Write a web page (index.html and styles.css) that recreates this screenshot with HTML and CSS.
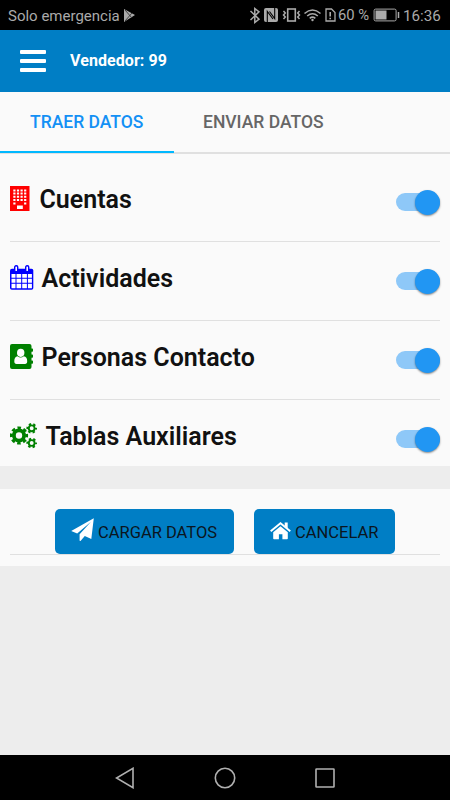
FILE: index.html
```html
<!DOCTYPE html>
<html lang="es">
<head>
<meta charset="utf-8">
<meta name="viewport" content="width=device-width, initial-scale=1">
<title>Vendedor</title>
<link rel="stylesheet" href="styles.css">
</head>
<body>
<div class="status">
  <span class="carrier">Solo emergencia</span>
  <svg class="play" width="13" height="13" viewBox="0 0 13 13"><path d="M1 0 12 6 1 13z" fill="#aaa"/><path d="M2 1 9 9M2 12 9 4" stroke="#333" stroke-width=".9"/></svg>
  <svg class="signals" width="90" height="18" viewBox="248 6 90 18" fill="none" stroke="#aaa" stroke-width="1.3">
    <path d="M250.500 11 259 19.200 254.800 22.500V8.500L259 11.800 250.500 20" stroke-width="1.500"/>
    <rect x="264" y="8" width="14" height="14" rx="2" fill="#aaa" stroke="none"/><path d="M267.300 22V11.500L273 19M274.700 8V18.500L269.500 11.500" stroke="#000" stroke-width="1.100"/>
    <rect x="287.700" y="9" width="7.600" height="12" stroke-width="1.600"/><path d="M283.500 11 285.300 13 283.500 15 285.300 17 283.500 19M299.500 11 297.700 13 299.500 15 297.700 17 299.500 19" stroke-width="1.500"/>
    <path d="M304.500 13.500Q312.500 6.500 320.500 13.500M307.200 16Q312.500 11.500 317.800 16M309.700 18.300Q312.500 16 315.300 18.300" stroke-width="1.600"/><circle cx="312.500" cy="20" r="1.200" fill="#aaa" stroke="none"/>
    <path d="M326 9H331.500L335 12.500V21H326z"/><path d="M330.200 12V16.500M330.200 17.700V19.200" stroke-width="1.600"/>
  </svg>
  <span class="percent">60 %</span>
  <svg class="battery" width="27" height="14" viewBox="0 0 27 14"><rect x="1.100" y="1.100" width="22" height="11.800" rx="1.500" fill="none" stroke="#aaa"/><path d="M2.500 2.500h11v9h-11z" fill="#aaa"/><path d="M25.500 4v6" stroke="#aaa" stroke-width="1.500"/></svg>
  <span class="clock">16:36</span>
</div>

<header class="bar">
  <div class="menu"><i></i><i></i><i></i></div>
  <h1>Vendedor: 99</h1>
</header>

<nav class="tabs">
  <a class="tab active">TRAER DATOS</a>
  <a class="tab">ENVIAR DATOS</a>
</nav>

<main class="list">
  <div class="row">
    <svg width="20" height="25" viewBox="0 0 20 25"><path d="M0 0h19.500v25H0z" fill="red"/><path d="M3.300 4.500h13M3.300 7.600h13M3.300 10.800h13M3.300 14h13" stroke="#fff" stroke-width="2" stroke-dasharray="2.200 1.400"/><path d="M3.300 16.500h2.200v2h-2.200zM14.100 16.500h2.200v2h-2.200zM7 19.400h5.800v3.700H7z" fill="#fff"/></svg>
    <span class="label cuentas">Cuentas</span><span class="switch"></span>
  </div>
  <div class="row">
    <svg width="24" height="25" viewBox="0 0 24 25"><path d="M2 3.700h19.500q1.800 0 1.800 1.800v17.500q0 1.800-1.800 1.800H1.800Q0 24.800 0 23V5.500Q0 3.700 2 3.700z" fill="#00f"/><path d="M1.500 9h4v3.700h-4zM6.500 9h4.700v3.700H6.500zM12.200 9h4.700v3.700h-4.700zM17.900 9h4v3.700h-4zM1.500 13.700h4v4.100h-4zM6.500 13.700h4.700v4.100H6.500zM12.200 13.700h4.700v4.100h-4.700zM17.900 13.700h4v4.100h-4zM1.500 18.800h4v4.500h-4zM6.500 18.800h4.700v4.500H6.500zM12.200 18.800h4.700v4.500h-4.700zM17.900 18.800h4v4.500h-4z" fill="#fff"/><rect x="4.700" y=".8" width="3" height="6" rx="1.300" fill="#fff" stroke="#00f" stroke-width="1.400"/><rect x="15.700" y=".8" width="3" height="6" rx="1.300" fill="#fff" stroke="#00f" stroke-width="1.400"/></svg>
    <span class="label actividades">Actividades</span><span class="switch"></span>
  </div>
  <div class="row">
    <svg width="24" height="25" viewBox="0 0 24 25"><path d="M2 0h17.500q2 0 2 2v2.500h.8q.7 0 .7.700v1.900q0 .7-.7.700h-.8v2.700h.8q.7 0 .7.700v1.900q0 .7-.7.700h-.8v2.700h.8q.7 0 .7.700v1.900q0 .7-.7.700h-.8V23q0 2-2 2H2q-2 0-2-2V2q0-2 2-2z" fill="green"/><ellipse cx="10.700" cy="8.800" rx="3.700" ry="4.100" fill="#fff"/><path d="M7.600 12.200q3 2.400 6.200 0 3.400.5 3.400 5 0 2.700-2.200 2.700H6.500q-2.200 0-2.200-2.700 0-4.500 3.300-5z" fill="#fff"/></svg>
    <span class="label personas">Personas Contacto</span><span class="switch"></span>
  </div>
  <div class="row">
    <svg width="28" height="26" viewBox="0 0 28 26" fill="none" stroke="green"><circle cx="9" cy="12.500" r="5.100" stroke-width="3.800"/><circle cx="9" cy="12.500" r="7.700" stroke-width="2.800" stroke-dasharray="3.500 2.548" stroke-dashoffset="1.750"/><circle cx="21.700" cy="5.300" r="2.900" stroke-width="1.900"/><circle cx="21.700" cy="5.300" r="4.300" stroke-width="2" stroke-dasharray="2.300 2.203" stroke-dashoffset="1.150"/><circle cx="21.700" cy="20" r="2.900" stroke-width="1.900"/><circle cx="21.700" cy="20" r="4.300" stroke-width="2" stroke-dasharray="2.300 2.203" stroke-dashoffset="1.150"/></svg>
    <span class="label tablas">Tablas Auxiliares</span><span class="switch"></span>
  </div>
</main>

<section class="actions">
  <div class="buttons">
    <button class="load"><svg width="23" height="24" viewBox="0 0 23 24"><path d="M22.800.2 20.300 21 13.800 18 9.500 23 8.600 22.700V16.300L20 3.800 6.200 15.600.2 12.900z" fill="#fff"/></svg><span>CARGAR DATOS</span></button>
    <button class="cancel"><svg width="21" height="18" viewBox="0 0 21 18"><path d="M10.500 4.200 17.800 10.300V16.500q0 .8-.8.800H12.400V12.300H8.900V17.300H4q-.8 0-.8-.8V10.300z" fill="#fff"/><path d="M.7 9.200 10.500 1.200 20.300 9.200" fill="none" stroke="#fff" stroke-width="1.900"/><path d="M14.700.5h3v6.200l-3-2.400z" fill="#fff"/></svg><span>CANCELAR</span></button>
  </div>
</section>

<footer class="nav">
  <svg width="20" height="22" viewBox="0 0 20 22"><path d="M18 1.300V20.700L1.500 11z"/></svg>
  <svg width="22" height="22" viewBox="0 0 22 22"><circle cx="11" cy="11" r="9.700"/></svg>
  <svg width="20" height="20" viewBox="0 0 20 20"><rect x="1" y="1" width="18" height="18" rx=".5"/></svg>
</footer>
</body>
</html>
```

FILE: styles.css
```css
* { box-sizing: border-box; }
body {
  margin: 0;
  width: 450px;
  height: 800px;
  display: flex;
  flex-direction: column;
  background: #ededed;
  font-family: Roboto, sans-serif;
  overflow: hidden;
}
svg { display: block; flex: none; }
span, a, h1 { white-space: nowrap; }

.status {
  height: 30px;
  flex: none;
  display: flex;
  align-items: center;
  background: #000;
  color: #aaa;
  padding-left: 8px;
  font-size: 15.5px;
}
.carrier { width: 115px; font-size: 15px; padding-top: 1px; }
.signals { margin-left: 112px; }
.percent { width: 35px; font-size: 14.800px; }
.battery { margin-right: 3px; }
.clock { font-size: 15.200px; padding-top: 1px; }

.bar {
  height: 62px;
  flex: none;
  display: flex;
  align-items: center;
  gap: 24px;
  padding-left: 20px;
  background: #007ec5;
  color: #fff;
}
.menu {
  width: 26px;
  display: flex;
  flex-direction: column;
  gap: 4.5px;
}
.menu i { height: 4.300px; background: #fff; border-radius: 1px; }
h1 { margin: 0; padding-bottom: 2px; font-size: 16px; font-weight: 700; letter-spacing: 0.070px; }

.tabs {
  height: 62px;
  flex: none;
  display: flex;
  background: #fafafa;
  border-bottom: 2px solid #e0e0e0;
}
.tab {
  height: 61px;
  padding: 0 30px;
  line-height: 60px;
  font-size: 17.500px;
  font-weight: 500;
  color: #666;
}
.tab + .tab { padding-left: 29px; }
.tab.active { width: 174px; color: #1390f5; border-bottom: 2px solid #00b8ff; }

.list {
  height: 312px;
  flex: none;
  padding: 9px 10px 0;
  background: #fafafa;
}
.row {
  height: 78.900px;
  display: flex;
  align-items: center;
  padding-bottom: 5px;
  border-bottom: 1.500px solid #e0e0e0;
}
.row:last-child { border-bottom: 0; padding-bottom: 6px; }
.row > svg { margin-top: -1px; }
.row:last-child > svg { margin-top: 0; }
.label {
  margin: 0 0 0 7.500px;
  font-size: 25px;
  font-weight: 600;
  color: #111;
}
.cuentas { margin-left: 9.500px; }
.switch {
  width: 44px;
  height: 18px;
  margin: 6px 0 0 auto;
  display: flex;
  align-items: center;
  justify-content: flex-end;
  border-radius: 9px;
  background: #8ec8f8;
}
.switch::before {
  content: "";
  width: 25px;
  height: 25px;
  border-radius: 50%;
  background: #2196f3;
  box-shadow: 0 1px 2px rgba(0, 0, 0, 0.45);
}

.actions {
  height: 77px;
  flex: none;
  margin-top: 23px;
  padding: 20px 10px 0;
  background: #fafafa;
}
.buttons {
  height: 46px;
  display: flex;
  gap: 20px;
  padding-left: 45px;
  border-bottom: 1px solid #e0e0e0;
}
button {
  height: 45px;
  display: flex;
  align-items: center;
  padding: 0 0 0 16px;
  border: 0;
  border-radius: 5px;
  background: #007ec5;
  color: #0b1520;
  font: 400 16.500px Roboto, sans-serif;
}
button span { margin: 2px 0 0 4px; }
.load { width: 179px; }
.load svg { margin-top: -3px; }
.cancel { width: 141px; }
.cancel svg { margin-top: -2px; }

.nav {
  height: 45px;
  flex: none;
  margin-top: auto;
  display: flex;
  align-items: center;
  justify-content: space-between;
  padding: 0 115px;
  background: #000;
}
.nav svg { fill: none; stroke: #b0b0b0; stroke-width: 1.600; }
```
